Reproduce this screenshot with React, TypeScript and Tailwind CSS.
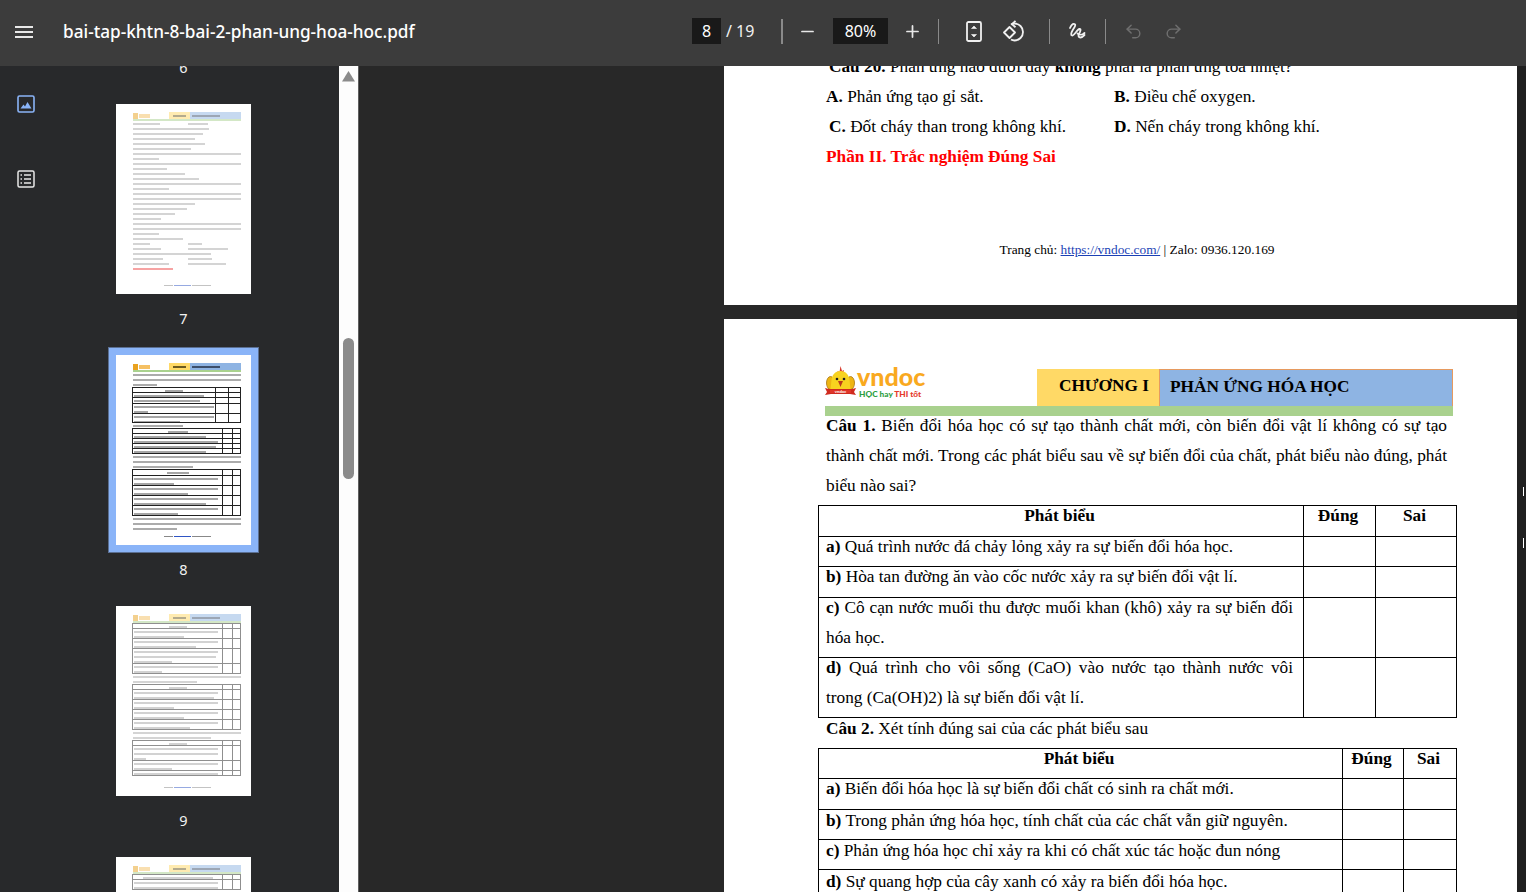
import React from 'react';
import { Undo2, Redo2, Plus, Minus } from 'lucide-react';

const Hamburger = () => (
  <div className="w-[18px] mt-[2px] flex flex-col gap-[3px]">
    <div className="h-[2px] bg-[#e8e8e8]" />
    <div className="h-[2px] bg-[#e8e8e8]" />
    <div className="h-[2px] bg-[#e8e8e8]" />
  </div>
);

const Sep = ({ thick }: { thick?: boolean }) => (
  <div className={`h-[25px] bg-[#8a8a8a] ${thick ? 'w-[2px]' : 'w-px'}`} />
);

const FitIcon = () => (
  <svg width="16" height="21" viewBox="0 0 16 21" fill="none">
    <rect x="1" y="1" width="14" height="19" rx="1.5" stroke="#f1f1f1" strokeWidth="1.8" />
    <path d="M5.5 7.5 8 5l2.5 2.5zM5.5 13.5 8 16l2.5-2.5z" fill="#f1f1f1" stroke="#f1f1f1" strokeWidth="0.6" />
  </svg>
);

const RotateIcon = () => (
  <svg width="23" height="22" viewBox="0 0 23 22" fill="none" stroke="#f1f1f1" strokeWidth="1.8">
    <path d="M6.5 7 12 12.5 6.5 18 1 12.5z" strokeLinejoin="round" />
    <path d="M8 4.5c1-.6 2.200-1 3.500-1a8.500 8.500 0 0 1 0 17c-1.300 0-2.500-.3-3.500-.9" />
    <path d="M12.500 .8 9 4.200l3.500 3" />
  </svg>
);

const DrawIcon = () => (
  <svg width="19" height="19" viewBox="0 0 19 19" fill="none" stroke="#f1f1f1" strokeWidth="1.8" strokeLinecap="round" strokeLinejoin="round">
    <path d="M2 6c1-2.500 3-4.500 4.500-4 2 .7-.5 4-2 6.500-1.200 2-2 4.500-.5 5 2 .6 5-6 7.500-6.500 1.800-.3 1 2.500-.5 5-1 1.800-.5 3.500 1.500 3.500 1.500 0 3-1.500 4-2.500" />
    <path d="M9.500 11.500c2.500 2 5.500 1 7-.5" />
  </svg>
);

const ThumbsIcon = () => (
  <svg width="18" height="18" viewBox="0 0 18 18" fill="none">
    <rect x="1" y="1" width="16" height="16" rx="1.5" stroke="#8ab4f8" strokeWidth="1.6" />
    <path d="M3.500 13.500 6.500 9.500l1.500 2 2.500-4.500 4 6.500z" fill="#8ab4f8" />
  </svg>
);

const OutlineIcon = () => (
  <svg width="18" height="18" viewBox="0 0 18 18" fill="none" stroke="#e8e8e8">
    <rect x="1" y="1" width="16" height="16" rx="1.5" strokeWidth="1.5" />
    <path d="M7 5h7M7 9h7M7 13h7" strokeWidth="1.6" />
    <path d="M3.500 5h1.500M3.500 9h1.500M3.500 13h1.500" strokeWidth="1.6" />
  </svg>
);

const Mascot = () => (
  <svg width="31" height="32" viewBox="0 0 31 32">
    <path d="M15.500 0l1.500 5 2-1-1 4H13l-.5-3 2 1z" fill="#d8382a" />
    <ellipse cx="5.500" cy="17" rx="4" ry="6.500" fill="#eeb512" stroke="#a9740c" strokeWidth="0.8" />
    <ellipse cx="25.500" cy="17" rx="4" ry="6.500" fill="#eeb512" stroke="#a9740c" strokeWidth="0.8" />
    <path d="M15.500 5c5.500 0 8.500 4 9 9l1 9h-20l1-9c.5-5 3.500-9 9-9z" fill="#f8d21f" />
    <circle cx="12" cy="13" r="1.300" fill="#222" />
    <circle cx="19" cy="13" r="1.300" fill="#222" />
    <path d="M13 15h5l-2.500 6z" fill="#b93a1c" />
    <path d="M0 22l4 1h23l4-1-2 4 2 3-6-1H6l-6 1 2-3z" fill="#cf2a1e" />
    <path d="M5 24h21v3H5z" fill="#e0352a" />
    <text x="15.500" y="27" textAnchor="middle" fontSize="4.200" fontWeight="700" fill="#fff" fontFamily="Lato, sans-serif">vndoc</text>
  </svg>
);

const Logo = () => (
  <div className="w-[212px] -mt-[3px] flex items-start shrink-0">
    <Mascot />
    <div className="ml-[1px] flex flex-col">
      <span className="h-[23px] text-[25px] leading-[21px] font-black text-[#f9a91f] font-['Lato',sans-serif]">vndoc</span>
      <span className="ml-[2px] text-[8.300px] leading-[10px] font-black whitespace-nowrap font-['Lato',sans-serif] text-[#2e9e3f]">
        HỌC hay <span className="text-[#e53a2b]">THI tốt</span>
      </span>
    </div>
  </div>
);

// one justified line of the document
const JL = ({ children }: { children: React.ReactNode }) => (
  <div className="[text-align:justify] [text-align-last:justify] whitespace-nowrap">{children}</div>
);

const PageFooter = () => (
  <div className="text-[13.350px] leading-[20px] text-center text-black">
    Trang chủ: <span className="text-[#1a3fb5] underline">https://vndoc.com/</span> | Zalo: 0936.120.169
  </div>
);

type Row = { h: string; content: React.ReactNode; head?: boolean };

const DocTable = ({ cols, rows, width }: { cols: [string, string, string]; rows: Row[]; width: string }) => (
  <table className={`-ml-[8px] table-fixed border-collapse ${width}`}>
    <colgroup>
      <col className={cols[0]} />
      <col className={cols[1]} />
      <col className={cols[2]} />
    </colgroup>
    <tbody>
      {rows.map((r, i) => (
        <tr key={i} className={r.h}>
          <td className={`border border-black align-top p-0 pl-[7px] pr-[10px] ${r.head ? 'font-bold text-center' : ''}`}>
            <div className="-mt-[5px]">{r.content}</div>
          </td>
          <td className={`border border-black align-top p-0 pr-[3px] text-center ${r.head ? 'font-bold' : ''}`}>
            <div className="-mt-[5px]">{r.head ? 'Đúng' : ''}</div>
          </td>
          <td className={`border border-black align-top p-0 pr-[3px] text-center ${r.head ? 'font-bold' : ''}`}>
            <div className="-mt-[5px]">{r.head ? 'Sai' : ''}</div>
          </td>
        </tr>
      ))}
    </tbody>
  </table>
);

const table1: Row[] = [
  { h: 'h-[31px]', head: true, content: 'Phát biểu' },
  { h: 'h-[30px]', content: <><b>a)</b> Quá trình nước đá chảy lỏng xảy ra sự biến đổi hóa học.</> },
  { h: 'h-[31px]', content: <><b>b)</b> Hòa tan đường ăn vào cốc nước xảy ra sự biến đổi vật lí.</> },
  { h: 'h-[60px]', content: <><JL><b>c)</b> Cô cạn nước muối thu được muối khan (khô) xảy ra sự biến đổi</JL><div>hóa học.</div></> },
  { h: 'h-[60px]', content: <><JL><b>d)</b> Quá trình cho vôi sống (CaO) vào nước tạo thành nước vôi</JL><div>trong (Ca(OH)2) là sự biến đổi vật lí.</div></> },
];

const table2: Row[] = [
  { h: 'h-[30px]', head: true, content: 'Phát biểu' },
  { h: 'h-[31px]', content: <><b>a)</b> Biến đổi hóa học là sự biến đổi chất có sinh ra chất mới.</> },
  { h: 'h-[30px]', content: <div className="pt-[1px]"><b>b)</b> Trong phản ứng hóa học, tính chất của các chất vẫn giữ nguyên.</div> },
  { h: 'h-[30px]', content: <div className="pt-[1px]"><b>c)</b> Phản ứng hóa học chỉ xảy ra khi có chất xúc tác hoặc đun nóng</div> },
  { h: 'h-[31px]', content: <div className="pt-[2px]"><b>d)</b> Sự quang hợp của cây xanh có xảy ra biến đổi hóa học.</div> },
];

/* ---- thumbnails: page previews drawn as grey bars ---- */

const TLine = ({ w, red }: { w: number; red?: boolean }) => (
  <div className="h-[5px] flex items-center shrink-0">
    <div className={`h-[2px] ${red ? 'bg-[#ef4a4a]' : 'bg-[#ababab]'}`} style={{ width: w }} />
  </div>
);

const TTwoCol = ({ a, b }: { a: number; b: number }) => (
  <div className="h-[5px] flex items-center shrink-0">
    <div className="w-[55px]"><div className="h-[2px] bg-[#ababab]" style={{ width: a }} /></div>
    <div className="h-[2px] bg-[#ababab]" style={{ width: b }} />
  </div>
);

type TRow = { h: number; lines: number[] };

const TTable = ({ first, second, rows }: { first: number; second: number; rows: TRow[] }) => (
  <div className="w-[109px] -ml-[1px] border-t border-l border-[#222] shrink-0">
    {rows.map((r, i) => (
      <div key={i} className="flex border-b border-[#222]" style={{ height: r.h }}>
        <div className="px-[1px] overflow-hidden" style={{ width: first }}>
          {r.lines.map((w, j) => (
            <div key={j} className={`h-[5px] flex items-center ${i === 0 ? 'justify-center' : ''}`}>
              <div className="h-[2px] bg-[#a6a6a6]" style={{ width: w }} />
            </div>
          ))}
        </div>
        <div className="border-l border-[#222]" style={{ width: second }} />
        <div className="border-l border-r border-[#222] flex-1" />
      </div>
    ))}
  </div>
);

const Thumb = ({ children, dim }: { children: React.ReactNode; dim?: boolean }) => (
  <div className="w-[135px] h-[190px] bg-white shrink-0 overflow-hidden">
    <div className={`h-full flex flex-col pl-[17px] pt-[8px] pb-[7px] blur-[0.4px] ${dim ? 'opacity-50' : ''}`}>
      <div className="w-[108px] shrink-0">
        <div className="flex h-[7px]">
          <div className="w-[36px] flex items-center gap-[1px]">
            <div className="w-[5px] h-[6px] bg-[#e9a21f]" />
            <div className="w-[11px] h-[4px] bg-[#f5c063]" />
          </div>
          <div className="w-[21px] bg-[#ffd966] flex items-center justify-center">
            <div className="w-[13px] h-[2px] bg-[#6b5a20]" />
          </div>
          <div className="flex-1 bg-[#8eb4e3] flex items-center pl-[2px]">
            <div className="w-[28px] h-[2px] bg-[#3c4f6b]" />
          </div>
        </div>
        <div className="h-[2px] bg-[#a9d18e]" />
      </div>
      {children}
      <div className="mt-auto flex justify-center w-[108px] shrink-0">
        <div className="flex items-center gap-[1px] h-[3px]">
          <div className="w-[9px] h-[1px] bg-[#888]" />
          <div className="w-[17px] h-[1px] bg-[#2f55c4]" />
          <div className="w-[19px] h-[1px] bg-[#888]" />
        </div>
      </div>
    </div>
  </div>
);

const Page7 = () => (
  <Thumb dim>
    <TTwoCol a={27} b={20} />
    {[76, 70, 62, 72, 58, 108, 26, 108, 34, 52, 66, 108, 36, 108, 108, 62, 54, 42, 28, 108, 108, 26, 50].map((w, i) => (
      <TLine key={i} w={w} />
    ))}
    <TTwoCol a={17} b={14} />
    <TTwoCol a={28} b={40} />
    <TLine w={78} />
    <TTwoCol a={30} b={24} />
    <TTwoCol a={36} b={38} />
    <TLine w={40} red />
  </Thumb>
);

const Page8 = () => (
  <Thumb>
    <TLine w={108} />
    <TLine w={108} />
    <TLine w={24} />
    <TTable first={82} second={13} rows={[
      { h: 5, lines: [18] },
      { h: 5, lines: [70] },
      { h: 6, lines: [66] },
      { h: 10, lines: [80, 14] },
      { h: 9, lines: [80, 46] },
    ]} />
    <TLine w={50} />
    <TTable first={89} second={10} rows={[
      { h: 5, lines: [20] },
      { h: 5, lines: [72] },
      { h: 5, lines: [84] },
      { h: 5, lines: [82] },
      { h: 5, lines: [72] },
    ]} />
    <TLine w={108} />
    <TLine w={108} />
    <TLine w={60} />
    <TTable first={89} second={10} rows={[
      { h: 6, lines: [22] },
      { h: 10, lines: [84, 40] },
      { h: 10, lines: [84, 54] },
      { h: 10, lines: [84, 72] },
      { h: 10, lines: [84, 44] },
    ]} />
    <TLine w={108} />
    <TLine w={108} />
    <TLine w={44} />
  </Thumb>
);

const Page9 = () => (
  <Thumb dim>
    <TTable first={89} second={10} rows={[
      { h: 5, lines: [18] },
      { h: 10, lines: [84, 50] },
      { h: 10, lines: [84, 62] },
      { h: 15, lines: [84, 82, 38] },
      { h: 10, lines: [84, 28] },
    ]} />
    <TLine w={108} />
    <TLine w={64} />
    <TTable first={89} second={10} rows={[
      { h: 5, lines: [18] },
      { h: 10, lines: [84, 80] },
      { h: 10, lines: [84, 40] },
      { h: 10, lines: [84, 50] },
      { h: 10, lines: [84, 56] },
    ]} />
    <TLine w={108} />
    <TLine w={78} />
    <TTable first={89} second={10} rows={[
      { h: 5, lines: [18] },
      { h: 15, lines: [84, 84, 12] },
      { h: 10, lines: [84, 38] },
      { h: 5, lines: [84] },
    ]} />
  </Thumb>
);

const Page10 = () => (
  <Thumb dim>
    <TTable first={89} second={10} rows={[
      { h: 5, lines: [70] },
      { h: 10, lines: [84, 84] },
    ]} />
    <TLine w={108} />
    <TLine w={108} />
  </Thumb>
);

const Label = ({ n }: { n: number }) => (
  <div className="h-[32px] pt-[2px] mb-[13px] shrink-0 flex items-center justify-center text-[14.500px] text-[#f1f1f1] font-['Noto_Sans',sans-serif]">
    {n}
  </div>
);

const ThumbCell = ({ children, selected }: { children: React.ReactNode; selected?: boolean }) => (
  <div className={`w-[151px] h-[206px] shrink-0 flex items-center justify-center ${selected ? 'bg-[#8ab4f8] border border-[#5b6f92]' : ''}`}>
    {children}
  </div>
);

export default function App() {
  return (
    <div className="w-[1526px] h-[892px] flex flex-col overflow-hidden bg-[#282828] font-['Liberation_Serif',serif] text-black">
      {/* Toolbar */}
      <header className="h-[66px] shrink-0 bg-[#3c3c3c] flex items-center text-[#f1f1f1] font-['Noto_Sans',sans-serif] pl-[15px] pb-[4px] z-10">
        <Hamburger />
        <div className="ml-[30px] mt-[2px] w-[629px] text-[17.200px] font-medium text-white whitespace-nowrap">bai-tap-khtn-8-bai-2-phan-ung-hoa-hoc.pdf</div>
        <div className="w-[29px] h-[26px] bg-[#191919] flex items-center justify-center text-[16px] text-white">8</div>
        <span className="ml-[5px] w-[55px] text-[16px]">/ 19</span>
        <Sep thick />
        <Minus size={19} strokeWidth={2.200} className="ml-[15px] text-[#e8e8e8]" />
        <div className="ml-[16px] w-[55px] h-[26px] bg-[#191919] flex items-center justify-center text-[16px] text-white">80%</div>
        <Plus size={19} strokeWidth={2.200} className="ml-[15px] text-[#e8e8e8]" />
        <div className="ml-[16px]"><Sep /></div>
        <div className="ml-[27px]"><FitIcon /></div>
        <div className="ml-[21px]"><RotateIcon /></div>
        <div className="ml-[23px]"><Sep /></div>
        <div className="ml-[18px]"><DrawIcon /></div>
        <div className="ml-[18px]"><Sep /></div>
        <Undo2 size={19} strokeWidth={1.800} className="ml-[18px] text-[#6f6f6f]" />
        <Redo2 size={19} strokeWidth={1.800} className="ml-[21px] text-[#6f6f6f]" />
      </header>

      <div className="flex-1 flex min-h-0">
        {/* Sidebar */}
        <aside className="w-[339px] shrink-0 bg-[#28292b] flex overflow-hidden">
          <nav className="w-[52px] shrink-0 pl-[17px] pt-[29px] flex flex-col gap-[57px]">
            <ThumbsIcon />
            <OutlineIcon />
          </nav>
          <div className="w-[151px] ml-[56px] -mt-[15px] flex flex-col">
            <Label n={6} />
            <ThumbCell><Page7 /></ThumbCell>
            <Label n={7} />
            <ThumbCell selected><Page8 /></ThumbCell>
            <Label n={8} />
            <ThumbCell><Page9 /></ThumbCell>
            <Label n={9} />
            <ThumbCell><Page10 /></ThumbCell>
          </div>
        </aside>

        {/* Sidebar scrollbar */}
        <div className="w-[19px] shrink-0 bg-[#fdfdfd] flex flex-col items-center">
          <svg width="13" height="11" viewBox="0 0 13 11" className="mt-[5px] shrink-0">
            <path d="M6.500 0 13 10.500H0z" fill="#8b8b8b" />
          </svg>
          <div className="w-[11px] h-[141px] mt-[256px] rounded-full bg-[#8b8b8b]" />
        </div>
        <div className="w-px shrink-0 bg-[#5f5f5f]" />

        {/* Document */}
        <main className="flex-1 flex overflow-hidden">
          <div className="pl-[365px] flex-1 min-w-0 -mt-[14px] flex flex-col gap-[14px] text-[17.300px] leading-[30px]">
            <section className="w-[793px] h-[253px] shrink-0 bg-white pl-[102px] pr-[69px]">
              <div className="pl-[3px]"><b>Câu 20.</b> Phản ứng nào dưới đây <b>không</b> phải là phản ứng tỏa nhiệt?</div>
              <div className="flex">
                <div className="w-[288px]"><b>A.</b> Phản ứng tạo gỉ sắt.</div>
                <div className="whitespace-nowrap"><b>B.</b> Điều chế oxygen.</div>
              </div>
              <div className="flex">
                <div className="w-[288px] pl-[3px]"><b>C.</b> Đốt cháy than trong không khí.</div>
                <div className="whitespace-nowrap"><b>D.</b> Nến cháy trong không khí.</div>
              </div>
              <div className="font-bold text-[#ff0000]">Phần II. Trắc nghiệm Đúng Sai</div>
              <div className="mt-[68px]"><PageFooter /></div>
            </section>

            <section className="w-[793px] h-[1122px] shrink-0 bg-white pl-[102px] pr-[69px] pt-[50px]">
              <div className="-ml-[1px] w-[628px] flex">
                <Logo />
                <div className="w-[122px] h-[37px] bg-[#ffd966] pr-[10px] pb-[3px] flex items-center justify-end font-bold text-[17.300px]">CHƯƠNG I</div>
                <div className="flex-1 h-[37px] bg-[#8eb4e3] border border-b-0 border-[#e69a5f] pl-[10px] pb-[3px] flex items-center font-bold text-[17.300px]">PHẢN ỨNG HÓA HỌC</div>
              </div>
              <div className="-ml-[1px] w-[628px] h-[10px] bg-[#a9d18e]" />
              <div className="-mt-[5px] pr-[1px]">
                <JL><b>Câu 1.</b> Biến đổi hóa học có sự tạo thành chất mới, còn biến đổi vật lí không có sự tạo</JL>
                <JL>thành chất mới. Trong các phát biểu sau về sự biến đổi của chất, phát biểu nào đúng, phát</JL>
                <div>biểu nào sai?</div>
              </div>
              <div className="mt-[4px]">
                <DocTable width="w-[638px]" cols={['w-[485px]', 'w-[72px]', 'w-[81px]']} rows={table1} />
              </div>
              <div className="-mt-[4px] mb-[4px]"><b>Câu 2.</b> Xét tính đúng sai của các phát biểu sau</div>
              <DocTable width="w-[638px]" cols={['w-[524px]', 'w-[61px]', 'w-[53px]']} rows={table2} />
            </section>
          </div>

          {/* Page scrollbar with find ticks */}
          <div className="w-[9px] shrink-0 bg-[#202020] flex flex-col items-center pl-[3px]">
            <div className="w-px h-[9px] mt-[421px] bg-white" />
            <div className="w-px h-[10px] mt-[42px] bg-white" />
          </div>
        </main>
      </div>
    </div>
  );
}
